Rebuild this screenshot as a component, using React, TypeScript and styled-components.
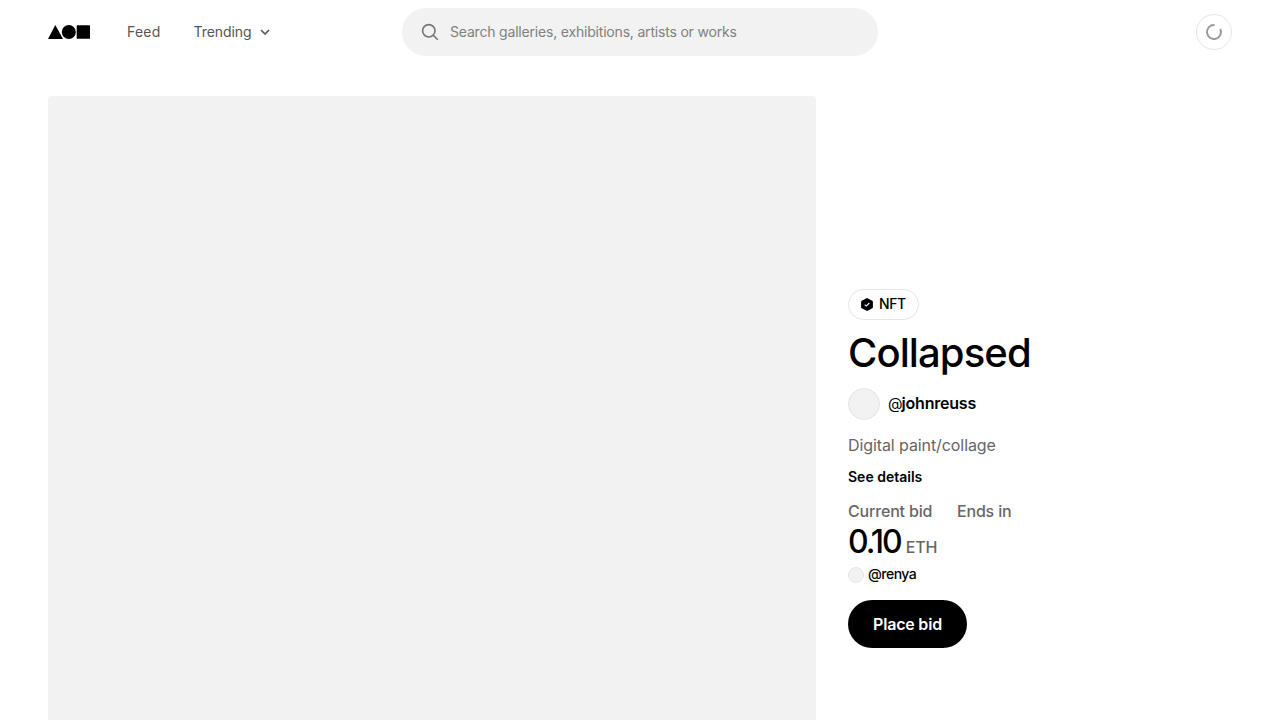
import React from "react";
import styled, { createGlobalStyle } from "styled-components";

const GlobalStyle = createGlobalStyle`
  *, *::before, *::after { box-sizing: border-box; }
  html, body { margin: 0; background: #fff; overflow: hidden; }
  body { font-family: Inter, "Liberation Sans", sans-serif; color: #000; }
  h1, p { margin: 0; }
  button, input { font: inherit; border: 0; }
`;

const Page = styled.div`
  height: 100vh;
  overflow: hidden;
`;

const Header = styled.header`
  display: grid;
  grid-template-columns: 1fr 476px 1fr;
  align-items: center;
  height: 64px;
  padding: 0 48px;
`;

const Nav = styled.nav`
  display: flex;
  align-items: center;
`;

const Logo = styled.svg`
  display: block;
  margin-right: 37px;
`;

const NavLink = styled.a<{ $tracking: string }>`
  display: flex;
  align-items: center;
  gap: 8px;
  margin-right: 33px;
  font-size: 14px;
  line-height: 20px;
  letter-spacing: ${(p) => p.$tracking};
  color: #555;
`;

const SearchBar = styled.label`
  display: flex;
  align-items: center;
  gap: 10px;
  height: 48px;
  padding: 0 19px;
  border-radius: 24px;
  background: #f2f2f2;
`;

const SearchInput = styled.input`
  flex: 1;
  padding: 0;
  outline: 0;
  background: transparent;
  font-size: 14px;
  line-height: 20px;
  letter-spacing: -0.19px;
  &::placeholder { color: #808080; opacity: 1; }
`;

const AccountButton = styled.button`
  display: grid;
  place-items: center;
  justify-self: end;
  width: 36px;
  height: 36px;
  padding: 0;
  border: 1px solid #e5e5e5;
  border-radius: 50%;
  background: #fff;
`;

const Main = styled.main`
  display: grid;
  grid-template-columns: 768px 1fr;
  gap: 32px;
  padding: 32px 48px 0;
`;

const Artwork = styled.div`
  height: 744px;
  border-radius: 4px;
  background: #f2f2f2;
`;

const Details = styled.section`
  display: flex;
  flex-direction: column;
  align-items: flex-start;
  padding-top: 193px;
`;

const Tag = styled.span`
  display: flex;
  align-items: center;
  gap: 6px;
  width: 71px;
  height: 31px;
  padding: 0 0 1px 12px;
  border: 1px solid #e5e5e5;
  border-radius: 16px;
  font-size: 14px;
  font-weight: 500;
  line-height: 20px;
  letter-spacing: -0.4px;
`;

const Title = styled.h1`
  margin-top: 9px;
  font-size: 40px;
  font-weight: 500;
  line-height: 48px;
  letter-spacing: -0.9px;
`;

const Person = styled.div<{ $small?: boolean }>`
  display: flex;
  align-items: center;
  gap: ${(p) => (p.$small ? 4 : 8)}px;
  margin-top: ${(p) => (p.$small ? 2 : 11)}px;
  font-size: ${(p) => (p.$small ? 14 : 16)}px;
  font-weight: ${(p) => (p.$small ? 500 : 600)};
  line-height: ${(p) => (p.$small ? 20 : 32)}px;
  letter-spacing: ${(p) => (p.$small ? -0.5 : -0.2)}px;
`;

const Handle = styled.span`
  padding-bottom: 2px;
  margin-bottom: -1px;
  margin-top: -1px;
`;

const AtSign = styled.span`
  font-size: 15px;
  font-weight: 400;
  line-height: 1;
  letter-spacing: -1px;
`;

const Avatar = styled.span<{ $size: number }>`
  width: ${(p) => p.$size}px;
  height: ${(p) => p.$size}px;
  border: 1px solid #e5e5e5;
  border-radius: 50%;
  background: #f2f2f2;
`;

const Description = styled.p`
  margin-top: 13px;
  font-size: 16px;
  line-height: 24px;
  letter-spacing: -0.09px;
  color: #666;
`;

const DetailsLink = styled.a`
  margin-top: 10px;
  font-size: 14px;
  font-weight: 600;
  line-height: 20px;
`;

const Auction = styled.div`
  display: flex;
  gap: 25px;
  margin-top: 12px;
`;

const AuctionColumn = styled.div`
  width: 84px;
  white-space: nowrap;
`;

const Label = styled.div`
  font-size: 16px;
  font-weight: 500;
  line-height: 24px;
  letter-spacing: -0.18px;
  color: #666;
`;

const Price = styled.div`
  display: flex;
  align-items: baseline;
  gap: 5px;
  height: 40px;
  font-size: 32px;
  font-weight: 500;
  line-height: 38px;
  letter-spacing: -2px;
`;

const Currency = styled.span`
  font-size: 16px;
  line-height: 24px;
  letter-spacing: -0.1px;
  color: #666;
`;

const BidButton = styled.button`
  width: 119px;
  height: 48px;
  margin-top: 15px;
  padding: 0;
  border-radius: 24px;
  background: #000;
  color: #fff;
  font-size: 16px;
  font-weight: 600;
  letter-spacing: -0.2px;
`;

export default function App() {
  return (
    <Page>
      <GlobalStyle />
      <Header>
        <Nav>
          <Logo width="42" height="14" viewBox="0 0 42 14">
            <path d="M7.3 0 15 14H0Z" />
            <circle cx="20.8" cy="7" r="7" />
            <rect x="28.7" y="0.3" width="13.3" height="13.4" rx="0.5" />
          </Logo>
          <NavLink $tracking="0.25px">Feed</NavLink>
          <NavLink $tracking="-0.08px">
            Trending
            <svg width="10" height="6" viewBox="0 0 10 6" fill="none" stroke="#555" strokeWidth="1.6">
              <path d="M1 1 5 5 9 1" />
            </svg>
          </NavLink>
        </Nav>
        <SearchBar>
          <svg width="19" height="19" viewBox="0 0 19 19" fill="none" stroke="#757575" strokeWidth="1.6">
            <circle cx="7.8" cy="7.8" r="6.2" />
            <path d="M12.2 12.2 16.8 16.8" />
          </svg>
          <SearchInput placeholder="Search galleries, exhibitions, artists or works" />
        </SearchBar>
        <AccountButton aria-label="Account">
          <svg width="18" height="18" viewBox="0 0 18 18" fill="none" stroke="#999" strokeWidth="2">
            <path d="M9.5 2A7 7 0 1 0 15.3 6" />
          </svg>
        </AccountButton>
      </Header>
      <Main>
        <Artwork />
        <Details>
          <Tag>
            <svg width="12" height="13" viewBox="0 0 12 13">
              <path
                d="M6 1.2 10.8 3.7V9.3L6 11.8 1.2 9.3V3.7Z"
                stroke="#000"
                strokeWidth="2.2"
                strokeLinejoin="round"
              />
              <path d="M3.7 6.6 5.3 8.1 8.3 5" fill="none" stroke="#fff" strokeWidth="1.1" />
            </svg>
            NFT
          </Tag>
          <Title>Collapsed</Title>
          <Person>
            <Avatar $size={32} />
            <Handle>
              <AtSign>@</AtSign>johnreuss
            </Handle>
          </Person>
          <Description>Digital paint/collage</Description>
          <DetailsLink>See details</DetailsLink>
          <Auction>
            <AuctionColumn>
              <Label>Current bid</Label>
              <Price>
                0.10 <Currency>ETH</Currency>
              </Price>
              <Person $small>
                <Avatar $size={16} />
                <Handle>@renya</Handle>
              </Person>
            </AuctionColumn>
            <AuctionColumn>
              <Label>Ends in</Label>
            </AuctionColumn>
          </Auction>
          <BidButton>Place bid</BidButton>
        </Details>
      </Main>
    </Page>
  );
}
